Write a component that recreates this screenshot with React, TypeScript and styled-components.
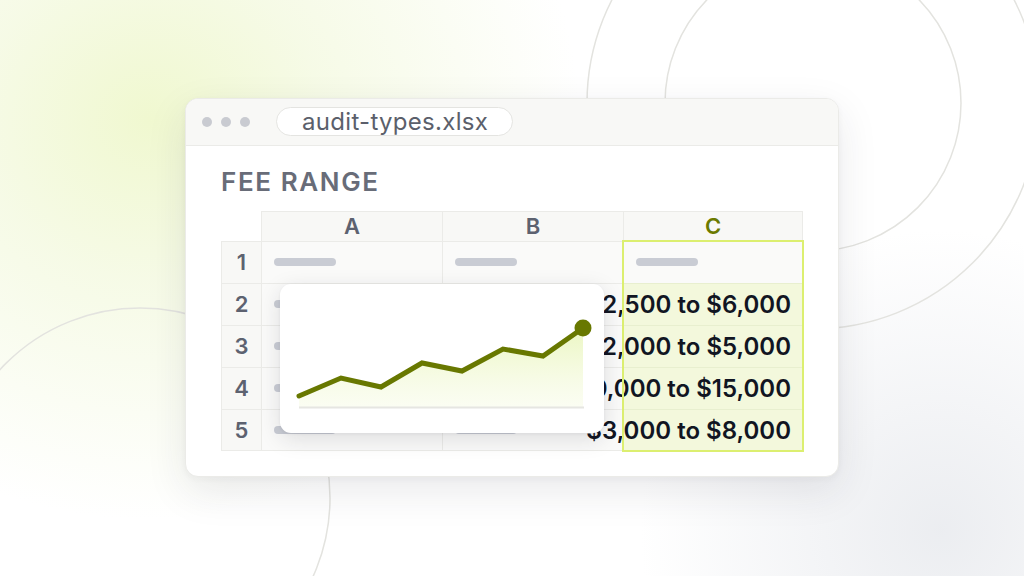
import React from "react";
import styled, { createGlobalStyle } from "styled-components";

const Global = createGlobalStyle`
  html, body { margin: 0; padding: 0; }
  body { font-family: Inter, "Noto Sans", sans-serif; background: #ffffff; }
`;

const Page = styled.div`
  position: relative;
  width: 1024px;
  height: 576px;
  overflow: hidden;
  display: flex;
  align-items: center;
  justify-content: center;
  background:
    radial-gradient(ellipse 430px 400px at 150px 120px, rgba(240, 248, 208, 1) 0%, rgba(243, 249, 222, 0.75) 40%, rgba(250, 252, 240, 0) 100%),
    radial-gradient(circle at 940px 530px, rgba(232, 234, 238, 0.85) 0px, rgba(240, 241, 244, 0) 300px),
    #ffffff;
`;

const Deco = styled.svg`
  position: absolute;
  inset: 0;
  pointer-events: none;
`;

const Window = styled.div`
  position: relative;
  width: 654px;
  height: 379px;
  margin-top: -2px;
  box-sizing: border-box;
  background: #ffffff;
  border: 1px solid #ebebe8;
  border-radius: 13px;
  box-shadow: 0 14px 40px rgba(40, 44, 60, 0.1), 0 2px 6px rgba(40, 44, 60, 0.04);
  display: flex;
  flex-direction: column;
  overflow: hidden;
`;

const TitleBar = styled.div`
  height: 47px;
  flex: none;
  box-sizing: border-box;
  background: #f8f8f6;
  border-bottom: 1px solid #ebebe8;
  display: flex;
  align-items: center;
  padding-left: 16px;
`;

const Dots = styled.div`
  display: flex;
  gap: 9px;
  margin-right: 26px;
`;

const Dot = styled.span`
  width: 10px;
  height: 10px;
  border-radius: 50%;
  background: #c9cbd1;
`;

const FilePill = styled.div`
  height: 29px;
  box-sizing: border-box;
  padding: 0 24px 0 25px;
  border: 1px solid #e4e4e1;
  border-radius: 15px;
  background: #ffffff;
  display: flex;
  align-items: center;
  font-size: 24px;
  letter-spacing: 0.3px;
  color: #5b5f6b;
`;

const Content = styled.div`
  padding: 21px 35px 0 35px;
  display: flex;
  flex-direction: column;
`;

const Heading = styled.div`
  font-size: 26px;
  font-weight: 600;
  letter-spacing: 1.6px;
  color: #686c78;
  line-height: 30px;
  margin-bottom: 14px;
`;

const TableWrap = styled.div`
  position: relative;
`;

const Grid = styled.div`
  display: grid;
  grid-template-columns: 40px 181px 181px 180px;
  grid-template-rows: 30px repeat(5, 42px);
`;

const Corner = styled.div``;

const ColHead = styled.div<{ $active?: boolean; $last?: boolean }>`
  background: #f8f8f6;
  border-top: 1px solid #ebebe8;
  border-left: 1px solid #ebebe8;
  border-right: ${(p) => (p.$last ? "1px solid #ebebe8" : "none")};
  display: flex;
  align-items: center;
  justify-content: center;
  font-size: 22px;
  font-weight: 600;
  color: ${(p) => (p.$active ? "#6b7a00" : "#5d6270")};
`;

const RowHead = styled.div<{ $last?: boolean }>`
  background: #f8f8f6;
  border-top: 1px solid #ebebe8;
  border-left: 1px solid #ebebe8;
  border-bottom: ${(p) => (p.$last ? "1px solid #ebebe8" : "none")};
  display: flex;
  align-items: center;
  justify-content: center;
  font-size: 22px;
  font-weight: 600;
  color: #5d6270;
`;

const Cell = styled.div<{ $last?: boolean }>`
  background: #fafaf9;
  border-top: 1px solid #ebebe8;
  border-left: 1px solid #ebebe8;
  border-bottom: ${(p) => (p.$last ? "1px solid #ebebe8" : "none")};
  display: flex;
  align-items: center;
  padding-left: 12px;
`;

const ValueCell = styled.div<{ $first?: boolean }>`
  position: relative;
  background: ${(p) => (p.$first ? "#fafaf9" : "#f3f8dc")};
  border-top: ${(p) => (p.$first ? "none" : "1px solid #e8efcf")};
  display: flex;
  align-items: center;
  justify-content: ${(p) => (p.$first ? "flex-start" : "flex-end")};
  padding: 0 12px 0 13px;
  overflow: visible;
`;

const Value = styled.span`
  white-space: nowrap;
  font-size: 24px;
  font-weight: 600;
  color: #111522;
`;

const Bar = styled.span`
  width: 62px;
  height: 8px;
  border-radius: 4px;
  background: #c9ccd4;
`;

const Highlight = styled.div`
  position: absolute;
  left: 401px;
  top: 29px;
  width: 182px;
  height: 212px;
  box-sizing: border-box;
  border: 2px solid #dcef70;
  pointer-events: none;
`;

const ChartCard = styled.div`
  position: absolute;
  left: 59px;
  top: 73px;
  width: 324px;
  height: 149px;
  background: #ffffff;
  border-radius: 11px;
  box-shadow: 0 6px 22px rgba(30, 34, 50, 0.13), 0 1px 3px rgba(30, 34, 50, 0.06);
`;

const rows = ["$2,500 to $6,000", "$2,000 to $5,000", "$10,000 to $15,000", "$3,000 to $8,000"];

const pts: [number, number][] = [
  [19, 112],
  [61, 94],
  [101, 103],
  [142, 79],
  [182, 87],
  [223, 65],
  [263, 72],
  [303, 44],
];

function Chart() {
  const line = pts.map((p, i) => `${i ? "L" : "M"}${p[0]} ${p[1]}`).join(" ");
  const area = `${line} L303 123 L19 123 Z`;
  return (
    <svg width="324" height="149" viewBox="0 0 324 149">
      <defs>
        <linearGradient id="ar" x1="0" y1="0" x2="0" y2="1">
          <stop offset="0" stopColor="#eaf6bf" stopOpacity="0.95" />
          <stop offset="1" stopColor="#f7fbe6" stopOpacity="0.5" />
        </linearGradient>
      </defs>
      <path d={area} fill="url(#ar)" />
      <line x1="19" y1="123.5" x2="304" y2="123.5" stroke="#e6e6e2" strokeWidth="2" />
      <path d={line} fill="none" stroke="#687800" strokeWidth="5" strokeLinejoin="miter" strokeLinecap="round" />
      <circle cx="303" cy="44" r="8.5" fill="#687800" />
    </svg>
  );
}

export default function App() {
  return (
    <>
      <Global />
      <Page>
        <Deco width="1024" height="576" viewBox="0 0 1024 576">
          <circle cx="813" cy="103" r="148" fill="none" stroke="#e3e3df" strokeWidth="1.5" />
          <circle cx="813" cy="103" r="226" fill="none" stroke="#e3e3df" strokeWidth="1.5" />
          <circle cx="140" cy="498" r="190" fill="none" stroke="#e3e3df" strokeWidth="1.5" />
        </Deco>
        <Window>
          <TitleBar>
            <Dots>
              <Dot />
              <Dot />
              <Dot />
            </Dots>
            <FilePill>audit-types.xlsx</FilePill>
          </TitleBar>
          <Content>
            <Heading>FEE RANGE</Heading>
            <TableWrap>
              <Grid>
                <Corner />
                <ColHead>A</ColHead>
                <ColHead>B</ColHead>
                <ColHead $active $last>
                  C
                </ColHead>
                <RowHead>1</RowHead>
                <Cell>
                  <Bar />
                </Cell>
                <Cell>
                  <Bar />
                </Cell>
                <ValueCell $first>
                  <Bar />
                </ValueCell>
                {rows.map((v, i) => (
                  <React.Fragment key={v}>
                    <RowHead $last={i === 3}>{i + 2}</RowHead>
                    <Cell $last={i === 3}>
                      <Bar />
                    </Cell>
                    <Cell $last={i === 3}>
                      <Bar />
                    </Cell>
                    <ValueCell>
                      <Value>{v}</Value>
                    </ValueCell>
                  </React.Fragment>
                ))}
              </Grid>
              <Highlight />
              <ChartCard>
                <Chart />
              </ChartCard>
            </TableWrap>
          </Content>
        </Window>
      </Page>
    </>
  );
}
